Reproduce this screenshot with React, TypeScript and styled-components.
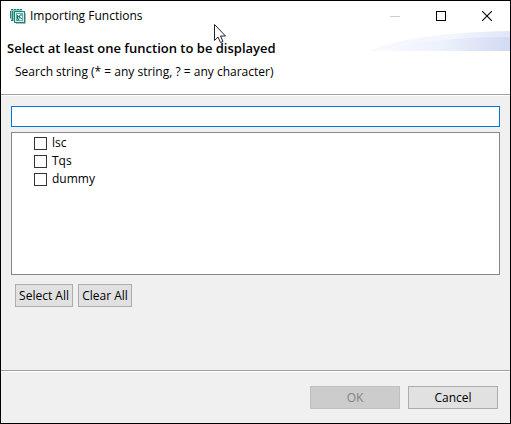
import React, { useState } from "react";
import styled, { createGlobalStyle } from "styled-components";

const GlobalStyle = createGlobalStyle`
  * { box-sizing: border-box; }
  body { margin: 0; }
  body, button, input {
    font-family: "Open Sans", "Noto Sans", sans-serif;
    font-size: 12px;
    line-height: 18px;
    color: #000;
  }
`;

const Dialog = styled.form`
  position: relative;
  display: flex;
  flex-direction: column;
  min-height: 100vh;
  border: 1px solid #000;
  background: #f0f0f0;
`;

const TitleBar = styled.header`
  display: flex;
  align-items: center;
  height: 30px;
  padding-left: 8px;
  gap: 4px;
  background: #fff;
`;

const Title = styled.span`
  flex: 1;
`;

const WindowControls = styled.div`
  display: flex;
`;

const WindowButton = styled.button`
  display: flex;
  align-items: center;
  justify-content: center;
  width: 46px;
  height: 28px;
  padding: 0;
  border: 0;
  background: transparent;
`;

const Banner = styled.section`
  position: relative;
  height: 65px;
  padding: 8px 6px 0;
  background: #fff;
  border-bottom: 1px solid #fff;
  box-shadow: inset 0 -1px #a0a0a0;
`;

const Swoosh = styled.svg`
  position: absolute;
  top: 0;
  right: 0;
`;

const Heading = styled.h1`
  position: relative;
  margin: 0;
  font-size: 13px;
  line-height: 18px;
  font-weight: 600;
`;

const SearchLabel = styled.label`
  display: block;
  margin: 6px 8px 0;
`;

const Content = styled.main`
  flex: 1;
  display: flex;
  flex-direction: column;
  padding: 10px;
`;

const SearchInput = styled.input`
  width: 100%;
  height: 21px;
  padding: 0 4px;
  border: 1px solid #0078d7;
  background: #fff;
  outline: none;
`;

const FunctionList = styled.ul`
  height: 143px;
  margin: 5px 0 9px;
  padding: 1px 0 0 22px;
  border: 1px solid #828790;
  background: #fff;
  list-style: none;
  overflow: auto;
`;

const FunctionItem = styled.li`
  height: 18px;
`;

const CheckLabel = styled.label`
  display: inline-flex;
  align-items: center;
  gap: 5px;
`;

const CheckBox = styled.input`
  appearance: none;
  width: 13px;
  height: 13px;
  margin: 0;
  border: 1px solid #333;
  background: #fff;

  &:checked {
    background: #333;
    box-shadow: inset 0 0 0 2px #fff;
  }
`;

const SelectionBar = styled.div`
  display: flex;
  gap: 5px;
  padding: 0 4px;
`;

const PushButton = styled.button<{ $width: number }>`
  width: ${(p) => p.$width}px;
  height: 23px;
  padding: 0;
  border: 1px solid #adadad;
  background: #e1e1e1;
  white-space: nowrap;

  &:disabled {
    color: #838383;
    border-color: #bfbfbf;
    background: #ccc;
  }
`;

const Footer = styled.footer`
  display: flex;
  justify-content: flex-end;
  gap: 8px;
  padding: 15px 12px 14px;
  border-top: 1px solid #a0a0a0;
  box-shadow: inset 0 1px #fff;
`;

const Pointer = styled.svg`
  position: absolute;
  left: 213px;
  top: 23px;
  pointer-events: none;
`;

const AppIcon = () => (
  <svg width="17" height="17" viewBox="0 0 17 17" aria-hidden="true">
    <path d="M2 1h11v3H5v9H2v-2H1V3h1z" fill="#8fc4be" />
    <path d="M2 1.500h2m1 0h2m1 0h2m1 0h2M1.500 3v7M3.500 3v9M2 12.500h2" fill="none" stroke="#237f78" />
    <path d="M7 15.500h9.500V5" fill="none" stroke="#b8b8b8" />
    <rect x="5.500" y="3.500" width="10" height="11" fill="#d6eeea" stroke="#16837c" />
    <rect x="7.500" y="5.500" width="6" height="7" fill="#effaf8" stroke="#5fb0a8" />
    <path d="M8 12h1.500l1.500-5h2M9 8l4 3M8.500 7v4" fill="none" stroke="#16736e" />
  </svg>
);

const functionNames = ["lsc", "Tqs", "dummy"];

export default function App() {
  const [selected, setSelected] = useState<string[]>([]);
  const [query, setQuery] = useState("");

  const toggle = (name: string) =>
    setSelected((current) =>
      current.includes(name) ? current.filter((n) => n !== name) : [...current, name]
    );

  return (
    <>
      <GlobalStyle />
      <Dialog onSubmit={(e) => e.preventDefault()}>
        <TitleBar>
          <AppIcon />
          <Title>Importing Functions</Title>
          <WindowControls>
            <WindowButton type="button" aria-label="Minimize" disabled>
              <svg width="10" height="10" viewBox="0 0 10 10">
                <path d="M0 5.500h10" stroke="#ccc" />
              </svg>
            </WindowButton>
            <WindowButton type="button" aria-label="Maximize">
              <svg width="10" height="10" viewBox="0 0 10 10">
                <rect x=".5" y=".5" width="9" height="9" fill="none" stroke="#000" />
              </svg>
            </WindowButton>
            <WindowButton type="button" aria-label="Close">
              <svg width="10" height="10" viewBox="0 0 10 10">
                <path d="M0 0l10 10M10 0L0 10" stroke="#000" strokeWidth="1.100" />
              </svg>
            </WindowButton>
          </WindowControls>
        </TitleBar>
        <Banner>
          <Swoosh width="140" height="20" viewBox="0 0 140 20" aria-hidden="true">
            <defs>
              <linearGradient id="upper">
                <stop offset="0" stopColor="#f7f9fd" />
                <stop offset=".6" stopColor="#f2f5fc" />
                <stop offset="1" stopColor="#dfe6f7" />
              </linearGradient>
              <linearGradient id="lower">
                <stop offset="0" stopColor="#fafbfe" />
                <stop offset=".5" stopColor="#edf1fb" />
                <stop offset="1" stopColor="#d2daf4" />
              </linearGradient>
            </defs>
            <path d="M0 20C25 8 75 1 140 0v20z" fill="url(#upper)" />
            <path d="M5 20C45 10 90 6 140 6v14z" fill="url(#lower)" />
          </Swoosh>
          <Heading>Select at least one function to be displayed</Heading>
          <SearchLabel htmlFor="search">
            Search string (* = any string, ? = any character)
          </SearchLabel>
        </Banner>
        <Content>
          <SearchInput
            id="search"
            type="text"
            value={query}
            onChange={(e) => setQuery(e.target.value)}
          />
          <FunctionList>
            {functionNames.map((name) => (
              <FunctionItem key={name}>
                <CheckLabel>
                  <CheckBox
                    type="checkbox"
                    checked={selected.includes(name)}
                    onChange={() => toggle(name)}
                  />
                  {name}
                </CheckLabel>
              </FunctionItem>
            ))}
          </FunctionList>
          <SelectionBar>
            <PushButton type="button" $width={58} onClick={() => setSelected(functionNames)}>
              Select All
            </PushButton>
            <PushButton type="button" $width={54} onClick={() => setSelected([])}>
              Clear All
            </PushButton>
          </SelectionBar>
        </Content>
        <Footer>
          <PushButton type="submit" $width={90} disabled={selected.length === 0}>
            OK
          </PushButton>
          <PushButton type="button" $width={90}>
            Cancel
          </PushButton>
        </Footer>
        <Pointer width="13" height="20" viewBox="0 0 13 20" aria-hidden="true">
          <path
            d="M.5 .5v16l3.500-3.500 2.500 5.500 2.500-1-2.500-5.500h5z"
            fill="#fff"
            stroke="#202030"
          />
        </Pointer>
      </Dialog>
    </>
  );
}
